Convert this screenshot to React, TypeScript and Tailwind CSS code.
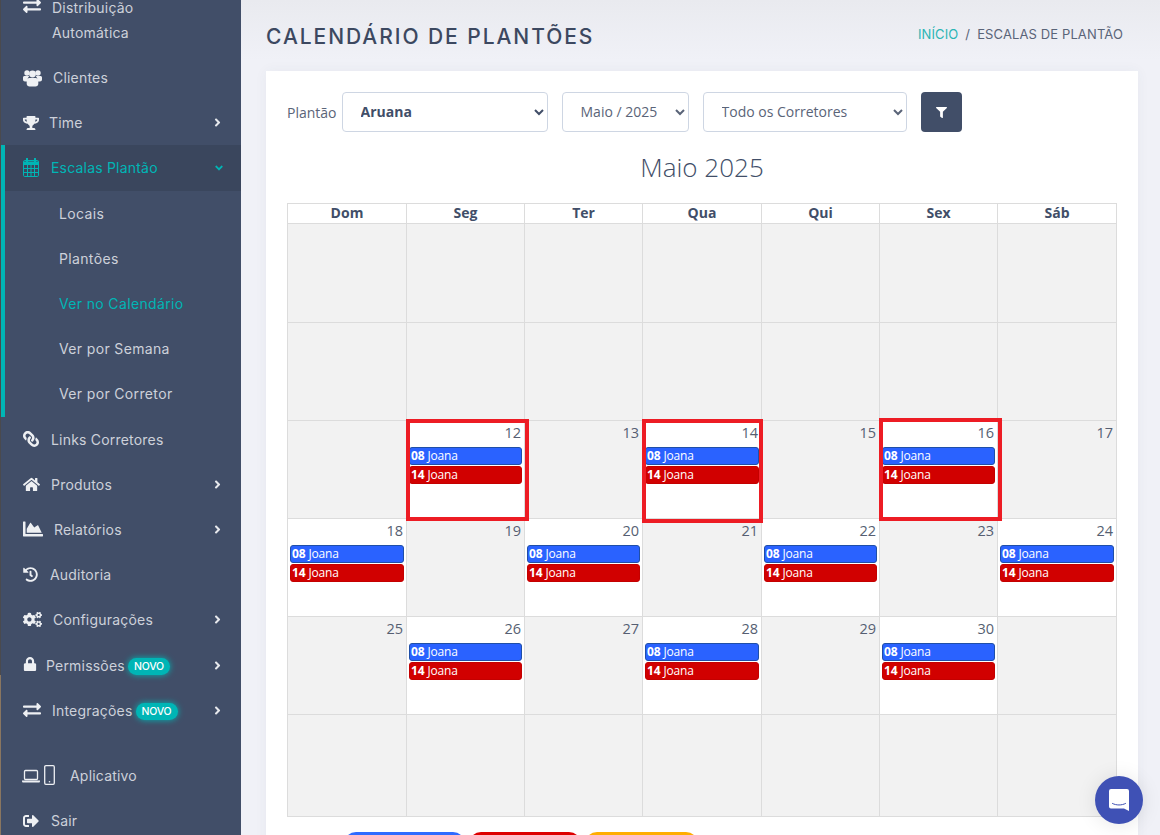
import React from 'react';
import {
  FaAngleDown,
  FaAngleRight,
  FaChartArea,
  FaCogs,
  FaExchangeAlt,
  FaFilter,
  FaHistory,
  FaHome,
  FaLink,
  FaLock,
  FaSignOutAlt,
  FaTrophy,
} from 'react-icons/fa';

const sans = 'font-["Inter","Liberation_Sans",sans-serif]';
const body = 'font-["Open_Sans","Noto_Sans",sans-serif]';

type IconProps = { className?: string };

const UsersIcon: React.FC<IconProps> = ({ className }) => (
  <svg className={className} width="19" height="18" viewBox="0 0 19 18" fill="currentColor">
    <circle cx="4" cy="4" r="2.7" />
    <circle cx="15" cy="4" r="2.7" />
    <path d="M0 8.4C0 7.4 1 7 2.2 7h3c.4 0 .8.1 1.100.3-1 .8-1.700 2.200-1.700 3.700 0 .6.100 1.100.300 1.500H2C.8 12.500 0 11.700 0 10.500z" />
    <path d="M19 8.400C19 7.400 18 7 16.800 7h-3c-.4 0-.8.100-1.100.3 1 .8 1.700 2.200 1.700 3.700 0 .6-.100 1.100-.3 1.500H17c1.200 0 2-.8 2-2z" />
    <circle cx="9.500" cy="5" r="3.400" />
    <path d="M6.300 9h6.400c1.500 0 2.600 1 2.600 2.700v3.100c0 1.800-1.300 2.700-2.800 2.700H6.500c-1.500 0-2.800-.9-2.800-2.700v-3.100C3.700 10 4.800 9 6.300 9z" />
  </svg>
);

const CalendarIcon: React.FC<IconProps> = ({ className }) => (
  <svg className={className} width="16" height="19" viewBox="0 0 16 19" fill="none" stroke="currentColor">
    <rect x="0.500" y="2.500" width="15" height="16" rx="1.200" />
    <path d="M0 3.500h16v3.500H0z" fill="currentColor" stroke="none" />
    <path d="M0.500 10.500h15M0.500 14.500h15M4.500 7v11.500M8 7v11.500M11.500 7v11.500" strokeWidth="1" />
    <path d="M4 0.500v3.500M12 0.500v3.500" strokeWidth="2" strokeLinecap="round" />
  </svg>
);

const DevicesIcon: React.FC<IconProps> = ({ className }) => (
  <svg className={className} width="33" height="20" viewBox="0 0 33 20" fill="none" stroke="currentColor">
    <rect x="2.500" y="5.500" width="13" height="9" rx="1" strokeWidth="1.300" />
    <path d="M0 15.500h18v.8c0 .8-.6 1.200-1.200 1.200H1.200C.6 17.500 0 17.100 0 16.300z" fill="currentColor" stroke="none" />
    <rect x="22.700" y="0.700" width="9.600" height="18.600" rx="1.200" strokeWidth="1.300" />
    <circle cx="27.500" cy="16.800" r="0.800" fill="currentColor" stroke="none" />
  </svg>
);

interface MenuItemProps {
  icon: React.ElementType;
  label: string;
  labelClass: string;
  iconClass?: string;
  arrow?: boolean;
  badge?: boolean;
}

const MenuItem: React.FC<MenuItemProps> = ({ icon: Icon, label, labelClass, iconClass = 'text-[16px]', arrow, badge }) => (
  <a className="flex h-[45.2px] items-center pl-[23px] pr-[17px] text-[#cdd1da]">
    <Icon className={`shrink-0 text-[#eef0f3] ${iconClass}`} />
    <span className={labelClass}>{label}</span>
    {badge && (
      <span className="ml-[3px] mt-[3px] flex h-[17px] w-[42px] items-center justify-center rounded-full bg-[#00b5b5] text-[10.5px] font-medium tracking-[-0.2px] text-white shadow-[0_0_6px_#00b5b5]">
        NOVO
      </span>
    )}
    {arrow && <FaAngleRight className="ml-auto text-[13px] text-[#e6e8ec]" />}
  </a>
);

const SubItem: React.FC<{ label: string; active?: boolean }> = ({ label, active }) => (
  <a className={`flex h-[45.2px] items-center pl-[54px] tracking-[0.35px] ${active ? 'text-[#00b5b5]' : 'text-[#cdd1da]'}`}>{label}</a>
);

const Sidebar: React.FC = () => (
  <aside className={`relative w-[241px] shrink-0 bg-[#414e68] text-[14px] tracking-[0.2px] ${sans}`}>
    <div className="absolute left-0 top-0 h-[675px] w-[1px] bg-[#4a4a4e]" />
    <div className="absolute left-0 top-[675px] h-[160px] w-[1px] bg-[#8a7660]" />
    <div className="-mt-[15px]">
      <a className="flex items-start py-[10px] pl-[23px] leading-[25px] text-[#cdd1da]">
        <FaExchangeAlt className="mt-[2px] shrink-0 text-[18px] text-[#eef0f3]" />
        <span className="ml-[11px] w-[100px]">Distribuição Automática</span>
      </a>
      <MenuItem icon={UsersIcon} label="Clientes" labelClass="ml-[11px]" iconClass="" />
      <MenuItem icon={FaTrophy} label="Time" labelClass="ml-[10px]" arrow />
      <div className="ml-[1px] border-l-4 border-[#00b5b5]">
        <a className="flex h-[45.2px] items-center bg-[#3a465d] pl-[18px] pr-[16px] text-[#00b5b5]">
          <CalendarIcon className="shrink-0" />
          <span className="ml-[12px]">Escalas Plantão</span>
          <FaAngleDown className="ml-auto text-[12px]" />
        </a>
        <SubItem label="Locais" />
        <SubItem label="Plantões" />
        <SubItem label="Ver no Calendário" active />
        <SubItem label="Ver por Semana" />
        <SubItem label="Ver por Corretor" />
      </div>
      <MenuItem icon={FaLink} label="Links Corretores" labelClass="ml-[12px]" iconClass="text-[16px] -scale-x-100" />
      <MenuItem icon={FaHome} label="Produtos" labelClass="ml-[11px]" iconClass="text-[17px]" arrow />
      <MenuItem icon={FaChartArea} label="Relatórios" labelClass="ml-[11px]" iconClass="text-[20px]" arrow />
      <MenuItem icon={FaHistory} label="Auditoria" labelClass="ml-[12px]" iconClass="text-[15px]" />
      <MenuItem icon={FaCogs} label="Configurações" labelClass="ml-[11px]" iconClass="text-[19px]" arrow />
      <MenuItem icon={FaLock} label="Permissões" labelClass="ml-[9px]" iconClass="-mt-[2px] text-[14px]" arrow badge />
      <MenuItem icon={FaExchangeAlt} label="Integrações" labelClass="ml-[11px]" iconClass="text-[18px]" arrow badge />
      <a className="mt-[20px] flex h-[45.2px] items-center pl-[22px] text-[#cdd1da]">
        <DevicesIcon className="text-[#eef0f3]" />
        <span className="ml-[15px]">Aplicativo</span>
      </a>
      <MenuItem icon={FaSignOutAlt} label="Sair" labelClass="ml-[12px]" />
    </div>
  </aside>
);

interface DayCell {
  day?: number;
  shifts?: boolean;
}

const rows: DayCell[][] = [
  [{}, {}, {}, {}, {}, {}, {}],
  [{}, {}, {}, {}, {}, {}, {}],
  [{}, { day: 12, shifts: true }, { day: 13 }, { day: 14, shifts: true }, { day: 15 }, { day: 16, shifts: true }, { day: 17 }],
  [{ day: 18, shifts: true }, { day: 19 }, { day: 20, shifts: true }, { day: 21 }, { day: 22, shifts: true }, { day: 23 }, { day: 24, shifts: true }],
  [{ day: 25 }, { day: 26, shifts: true }, { day: 27 }, { day: 28, shifts: true }, { day: 29 }, { day: 30, shifts: true }, {}],
  [{}, {}, {}, {}, {}, {}, {}],
];

const rowHeights = ['h-[99px]', 'h-[98px]', 'h-[98px]', 'h-[98px]', 'h-[98px]', 'h-[102px]'];
const columns = 'grid grid-cols-[119px_118px_118px_119px_118px_118px_119px]';

const Shift: React.FC<{ hour: string; color: string }> = ({ hour, color }) => (
  <div className={`mb-[1px] flex h-[18px] items-center rounded-[3px] border px-[1px] text-[12px] tracking-[-0.15px] text-white ${color}`}>
    <b className="mr-[3px] font-bold">{hour}</b>
    Joana
  </div>
);

const Calendar: React.FC = () => (
  <div className="relative border-l border-t border-[#dcdcdc] text-[#414e68]">
    <div className={`${columns} h-[20px]`}>
      {['Dom', 'Seg', 'Ter', 'Qua', 'Qui', 'Sex', 'Sáb'].map((name) => (
        <div key={name} className="flex h-[20px] items-center justify-center border-b border-r border-[#dcdcdc] pb-[2px] text-[14px] font-bold leading-[19px]">
          {name}
        </div>
      ))}
    </div>
    {rows.map((row, idx) => (
      <div key={idx} className={`${columns} ${rowHeights[idx]}`}>
        {row.map((cell, cellIdx) => (
          <div
            key={cellIdx}
            className={`border-b border-r border-[#dcdcdc] px-[2px] ${cell.shifts ? 'bg-white' : 'bg-[#f2f2f2]'}`}
          >
            {cell.day && <p className="h-[26px] pt-[1px] pr-[1px] text-right text-[14.5px] leading-[22px] text-[#565f72]">{cell.day}</p>}
            {cell.shifts && (
              <>
                <Shift hour="08" color="border-[#1f4fa8] bg-[#2a62ff]" />
                <Shift hour="14" color="border-[#c40000] bg-[#d10000]" />
              </>
            )}
          </div>
        ))}
      </div>
    ))}
    <div className="absolute left-[118px] top-[215px] h-[102px] w-[123px] border-4 border-[#ed1c24]" />
    <div className="absolute left-[354px] top-[215px] h-[104px] w-[121px] border-4 border-[#ed1c24]" />
    <div className="absolute left-[591px] top-[214px] h-[103px] w-[123px] border-4 border-[#ed1c24]" />
  </div>
);

const App: React.FC = () => (
  <div className={`relative flex h-[835px] overflow-hidden bg-[#f0f1f7] ${body}`}>
    <Sidebar />
    <main className="min-w-0 flex-1 bg-gradient-to-b from-[#e9eaef] to-[#f0f1f7] to-[60px] pl-[25px] pr-[22px]">
      <div className={`flex h-[71px] items-center justify-between ${sans}`}>
        <h1 className="mt-[2px] text-[21px] font-medium tracking-[1.95px] text-[#3c4860]">CALENDÁRIO DE PLANTÕES</h1>
        <p className="-mt-[2px] pr-[15px] text-[13px] tracking-[0.12px] text-[#5a6478]">
          <span className="text-[#2bb5b5]">INÍCIO</span>
          <span className="mx-[7px]">/</span>
          ESCALAS DE PLANTÃO
        </p>
      </div>
      <section className="h-[800px] bg-white px-[21px] pt-[21px] shadow-[0_0_12px_rgba(65,78,104,0.05)]">
        <form className="flex items-center">
          <label className="mr-[5px] text-[14px] text-[#5a6478]">Plantão</label>
          <select className="h-[40px] w-[206px] rounded-[4px] border border-[#ced6e3] bg-white pb-[2px] pl-[14px] text-[14px] font-bold text-[#414e68]">
            <option>Aruana</option>
          </select>
          <select className="ml-[14px] h-[40px] w-[127px] rounded-[4px] border border-[#ced6e3] bg-white pb-[2px] pl-[14px] text-[14px] text-[#5a6478]">
            <option>Maio / 2025</option>
          </select>
          <select className="ml-[14px] h-[40px] w-[204px] rounded-[4px] border border-[#ced6e3] bg-white pb-[2px] pl-[14px] text-[14px] text-[#5a6478]">
            <option>Todo os Corretores</option>
          </select>
          <button type="button" className="ml-[14px] flex h-[40px] w-[41px] items-center justify-center rounded-[4px] bg-[#414e68] text-white">
            <FaFilter className="text-[11px]" />
          </button>
        </form>
        <h2 className="flex h-[71px] items-center justify-center pb-[1px] text-[26px] font-light text-[#414e68]">Maio 2025</h2>
        <Calendar />
        <div className="ml-[57px] mt-[15px] flex gap-[4px]">
          <span className="h-[24px] w-[121px] rounded-full bg-[#2f6bff]" />
          <span className="h-[24px] w-[112px] rounded-full bg-[#dd0000]" />
          <span className="h-[24px] w-[113px] rounded-full bg-[#ffad00]" />
        </div>
      </section>
    </main>
    <button
      type="button"
      className="absolute bottom-[11px] right-[17px] flex h-[48px] w-[48px] items-center justify-center rounded-full bg-[#3f51b5] shadow-[0_1px_20px_rgba(0,0,0,0.1)]"
    >
      <svg width="22" height="24" viewBox="0 0 22 24">
        <path d="M3 1h16a2 2 0 0 1 2 2v20l-5-2.500H3a2 2 0 0 1-2-2V3a2 2 0 0 1 2-2z" fill="#fff" />
        <path d="M4.500 15.500c4 2 9 2 13 0" fill="none" stroke="#3f51b5" strokeWidth="1" strokeLinecap="round" />
      </svg>
    </button>
  </div>
);

export default App;
